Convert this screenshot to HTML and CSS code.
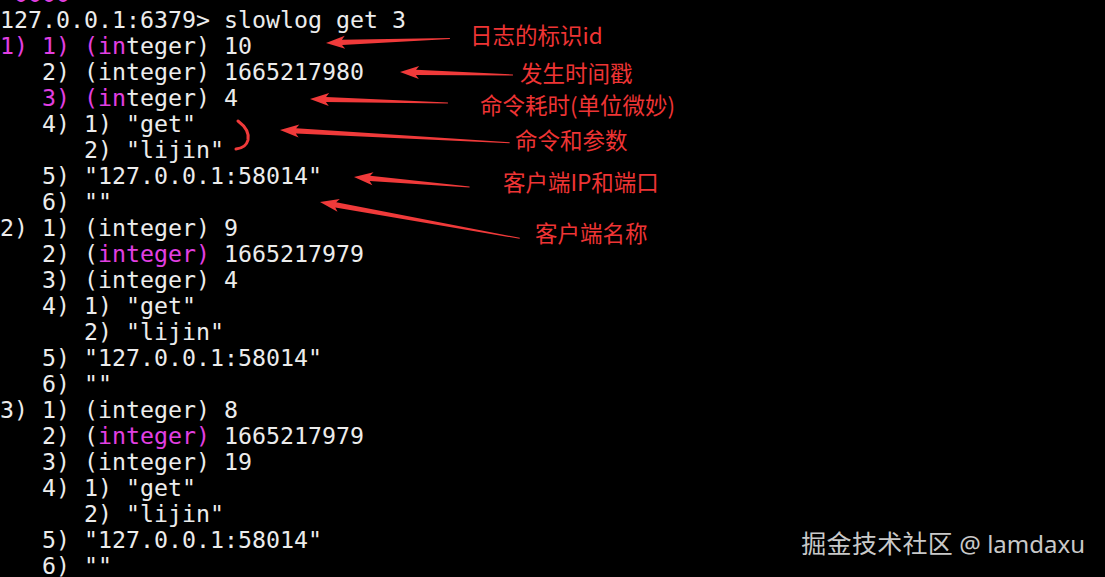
FILE: index.html
```html
<!DOCTYPE html>
<html>
<head>
<meta charset="utf-8">
<link rel="stylesheet" href="styles.css">
</head>
<body>
<div class="screen">
<pre class="term"><span class="m"> 0000</span>
127.0.0.1:6379&gt; slowlog get 3
<span class="m">1) 1) (in</span>teger) 10
   2) (integer) 1665217980
   <span class="m">3) (in</span>teger) 4
   4) 1) "get"
      2) "lijin"
   5) "127.0.0.1:58014"
   6) ""
2) 1) (integer) 9
   2) (<span class="m">integer)</span> 1665217979
   3) (integer) 4
   4) 1) "get"
      2) "lijin"
   5) "127.0.0.1:58014"
   6) ""
3) 1) (integer) 8
   2) (<span class="m">integer)</span> 1665217979
   3) (integer) 19
   4) 1) "get"
      2) "lijin"
   5) "127.0.0.1:58014"
   6) ""</pre>

<svg class="marks" width="1105" height="577" viewBox="0 0 1105 577">
  <g fill="#f03a3a">
    <path transform="translate(326 43) rotate(-2.1)" d="M0 0 L19 -6.5 L16 -2.6 L124 -0.5 L124 0.5 L16 2.6 L19 6.5 Z"/>
    <path transform="translate(400 72) rotate(1.5)" d="M0 0 L19 -6.5 L16 -2.6 L113 -0.5 L113 0.5 L16 2.6 L19 6.5 Z"/>
    <path transform="translate(310 99) rotate(1.7)" d="M0 0 L19 -6.5 L16 -2.6 L138 -0.5 L138 0.5 L16 2.6 L19 6.5 Z"/>
    <path transform="translate(280 130) rotate(3.2)" d="M0 0 L19 -6.5 L16 -2.6 L230 -0.5 L230 0.5 L16 2.6 L19 6.5 Z"/>
    <path transform="translate(354 177) rotate(5.0)" d="M0 0 L19 -6.5 L16 -2.6 L116 -0.5 L116 0.5 L16 2.6 L19 6.5 Z"/>
    <path transform="translate(320 202) rotate(10.3)" d="M0 0 L19 -6.5 L16 -2.6 L203 -0.5 L203 0.5 L16 2.6 L19 6.5 Z"/>
  </g>
  <path d="M238 121 Q250 130 248 140 Q246 148 236 149" fill="none" stroke="#f03a3a" stroke-width="3" stroke-linecap="round"/>
</svg>

<span class="note n1">日志的标识id</span>
<span class="note n2">发生时间戳</span>
<span class="note n3">命令耗时(单位微妙)</span>
<span class="note n4">命令和参数</span>
<span class="note n5">客户端IP和端口</span>
<span class="note n6">客户端名称</span>

<span class="watermark"><span class="wm-cn">掘金技术社区</span> @ lamdaxu</span>
</div>
</body>
</html>
```

FILE: styles.css
```css
html, body {
  margin: 0;
  padding: 0;
  background: #000;
}

.screen {
  position: relative;
  width: 1105px;
  height: 577px;
  overflow: hidden;
  background: #000;
}

.term {
  margin: -19.5px 0 0 0;
  padding: 0;
  font-family: "DejaVu Sans Mono", monospace;
  font-size: 23.25px;
  line-height: 26px;
  color: #ececec;
  white-space: pre;
}

.term .m {
  color: #e23fe2;
}

.marks {
  position: absolute;
  left: 0;
  top: 0;
  pointer-events: none;
}

.note {
  position: absolute;
  font-family: "Noto Sans CJK SC", "Noto Sans", sans-serif;
  font-size: 22.5px;
  line-height: 30px;
  color: #ee3434;
  white-space: nowrap;
}

.n1 { left: 470px; top: 19px; }
.n2 { left: 520px; top: 57px; }
.n3 { left: 480px; top: 89px; }
.n4 { left: 515px; top: 124px; }
.n5 { left: 503px; top: 166px; }
.n6 { left: 535px; top: 217px; }

.watermark {
  position: absolute;
  right: 20px;
  top: 527px;
  font-family: "Noto Sans", "Noto Sans CJK SC", sans-serif;
  font-size: 24px;
  line-height: 30px;
  color: #c9c9c9;
  white-space: nowrap;
}

.wm-cn {
  font-family: "Noto Sans CJK SC", sans-serif;
  font-size: 25px;
  letter-spacing: 0.3px;
}
```
